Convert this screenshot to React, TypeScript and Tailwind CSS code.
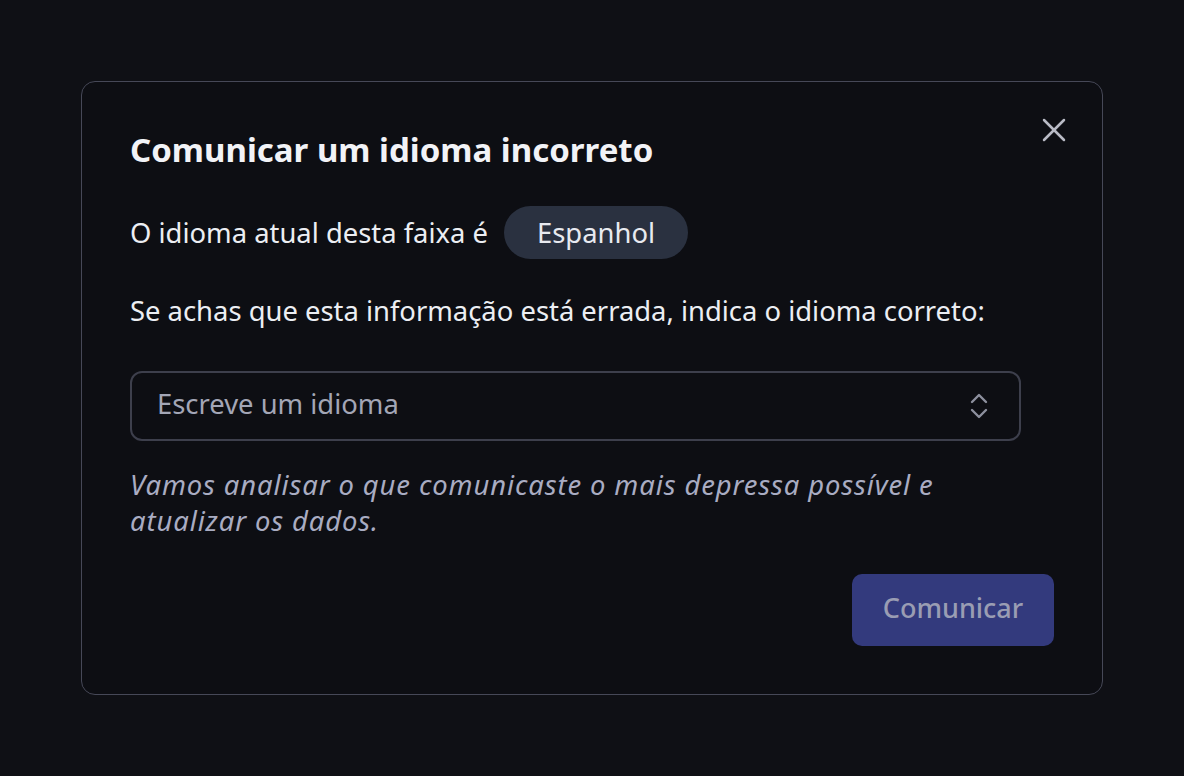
import { X } from 'lucide-react'

const font = { fontFamily: '"Noto Sans", "Liberation Sans", sans-serif' }

function ChevronsUpDown() {
  return (
    <svg width="20" height="28" viewBox="0 0 20 28" fill="none" className="text-[#8d909e]">
      <path d="M3 10 L10 3 L17 10" stroke="currentColor" strokeWidth="2.4" strokeLinecap="round" strokeLinejoin="round" />
      <path d="M3 18 L10 25 L17 18" stroke="currentColor" strokeWidth="2.4" strokeLinecap="round" strokeLinejoin="round" />
    </svg>
  )
}

export default function App() {
  return (
    <div className="min-h-[776px] w-full bg-[#0f1015] pt-[81px]" style={font}>
      <div className="relative mx-auto w-[1022px] rounded-[14px] border border-[#464857] bg-[#0d0e13] pb-12 pl-12 pr-12 pt-12">
        <button
          type="button"
          className="absolute right-[28px] top-[28px] flex h-10 w-10 items-center justify-center text-[#b9bbc6]"
        >
          <X className="h-10 w-10" strokeWidth={1.5} />
        </button>

        <h2 className="text-[33px] font-bold leading-[40px] text-[#f2f3f7]">
          Comunicar um idioma incorreto
        </h2>

        <div className="mt-9 flex items-center gap-4">
          <p className="text-[27.4px] leading-[36px] text-[#eceef3]">O idioma atual desta faixa é</p>
          <span className="flex h-[53px] items-center rounded-full bg-[#2a3140] px-[33px] text-[27.4px] text-[#e8eaf0]">
            Espanhol
          </span>
        </div>

        <p className="mt-[34px] text-[27.4px] leading-[36px] text-[#eceef3]">
          Se achas que esta informação está errada, indica o idioma correto:
        </p>

        <div className="mt-[42px] flex h-[70px] w-[891px] items-center justify-between rounded-[12px] border-2 border-[#3d3f4c] pl-[25px] pr-[30px]">
          <span className="-mt-[4px] text-[27.4px] text-[#a3a6b6]">Escreve um idioma</span>
          <ChevronsUpDown />
        </div>

        <p className="mt-[26px] text-[27.4px] italic leading-[36px] tracking-[0.9px] text-[#a9acc2]">
          Vamos analisar o que comunicaste o mais depressa possível e
          <br />
          atualizar os dados.
        </p>

        <div className="mt-[35px] flex justify-end">
          <button
            type="button"
            className="h-[72px] w-[202px] rounded-[10px] bg-[#333a7d] pb-1 text-[27px] font-medium text-[#9a9db3]"
          >
            Comunicar
          </button>
        </div>
      </div>
    </div>
  )
}
